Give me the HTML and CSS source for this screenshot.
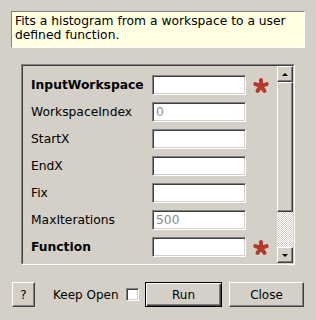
FILE: index.html
```html
<!DOCTYPE html>
<html>
	<head>
		<meta charset="UTF-8">
		<title>Fit</title>
		<link rel="stylesheet" href="styles.css">
	</head>
	<body>
		<div class="desc">Fits a histogram from a workspace to a user defined function.</div>

		<div class="frame">
			<div class="frame-in">
				<div class="props">
					<div class="row">
						<span class="name bold">InputWorkspace</span>
						<span class="field"></span>
						<svg class="star" width="18" height="17" viewBox="-9 -9 18 17">
							<path d="M0 0L0 -6M0 0L5.7 -1.9M0 0L3.5 4.9M0 0L-3.5 4.9M0 0L-5.7 -1.9" stroke="#b23a2c" stroke-width="4" stroke-linecap="round" fill="none"/>
						</svg>
					</div>
					<div class="row">
						<span class="name">WorkspaceIndex</span>
						<span class="field">0</span>
					</div>
					<div class="row">
						<span class="name">StartX</span>
						<span class="field"></span>
					</div>
					<div class="row">
						<span class="name">EndX</span>
						<span class="field"></span>
					</div>
					<div class="row">
						<span class="name">Fix</span>
						<span class="field"></span>
					</div>
					<div class="row">
						<span class="name">MaxIterations</span>
						<span class="field">500</span>
					</div>
					<div class="row">
						<span class="name bold">Function</span>
						<span class="field"></span>
						<svg class="star" width="18" height="17" viewBox="-9 -9 18 17">
							<path d="M0 0L0 -6M0 0L5.7 -1.9M0 0L3.5 4.9M0 0L-3.5 4.9M0 0L-5.7 -1.9" stroke="#b23a2c" stroke-width="4" stroke-linecap="round" fill="none"/>
						</svg>
					</div>
					<div class="row">
						<span class="name"></span>
						<span class="field"></span>
					</div>
				</div>
				<div class="vbar">
					<div class="arrow up"><i></i></div>
					<div class="handle"></div>
					<div class="track"></div>
					<div class="arrow down"><i></i></div>
				</div>
			</div>
		</div>

		<div class="footer">
			<div class="btn help">?</div>
			<span class="keep">Keep Open</span>
			<span class="check"></span>
			<div class="btn run">Run</div>
			<div class="btn close">Close</div>
		</div>
	</body>
</html>
```

FILE: styles.css
```css
*{
	margin: 0;
	padding: 0;
	box-sizing: border-box;
}
body{
	width: 316px;
	height: 320px;
	background: #d4d0c8;
	font-family: "DejaVu Sans", sans-serif;
	font-size: 12.3px;
	color: #000;
	overflow: hidden;
}
.desc{
	margin: 11px 0 0 11px;
	width: 294px;
	height: 37px;
	padding: 2px 3px 0 3px;
	background: #ffffe1;
	border: 1px solid #fff;
	border-top-color: #808080;
	border-left-color: #808080;
	line-height: 14px;
}
.frame{
	margin: 16px 0 0 21px;
	width: 274px;
	height: 201px;
	border: 1px solid #fff;
	border-top-color: #808080;
	border-left-color: #808080;
}
.frame-in{
	height: 100%;
	display: flex;
	border: 1px solid #d4d0c8;
	border-top-color: #404040;
	border-left-color: #404040;
}
.props{
	flex: 1;
	overflow: hidden;
	padding: 9px 0 0 8px;
	display: flex;
	flex-direction: column;
	gap: 7px;
}
.row{
	display: flex;
	align-items: center;
	height: 20px;
	flex-shrink: 0;
}
.name{
	width: 121px;
}
.bold{
	font-weight: bold;
}
.field{
	width: 94px;
	height: 20px;
	background: #fff;
	border: 1px solid #fff;
	border-top-color: #808080;
	border-left-color: #808080;
	box-shadow: inset 1px 1px #404040, inset -1px -1px #d4d0c8;
	padding: 0 3px;
	line-height: 18px;
	color: #8a8a8a;
}
.star{
	margin-left: 6px;
}
.vbar{
	width: 16px;
	display: flex;
	flex-direction: column;
}
.arrow, .handle{
	background: #d4d0c8;
	border: 1px solid #404040;
	border-top-color: #fff;
	border-left-color: #fff;
	box-shadow: inset -1px -1px #808080;
}
.arrow{
	height: 16px;
	display: flex;
	align-items: center;
	justify-content: center;
}
.arrow i{
	width: 0;
	height: 0;
	border-left: 3px solid transparent;
	border-right: 3px solid transparent;
}
.up i{
	border-bottom: 3px solid #000;
}
.down i{
	border-top: 3px solid #000;
}
.handle{
	height: 130px;
}
.track{
	flex: 1;
	background-image: repeating-conic-gradient(#fff 0 25%, #d4d0c8 0 50%);
	background-size: 2px 2px;
}
.footer{
	margin-top: 17px;
	padding-left: 12px;
	display: flex;
	align-items: center;
	font-size: 12px;
}
.btn{
	height: 25px;
	display: flex;
	align-items: center;
	justify-content: center;
	border: 1px solid #404040;
	border-top-color: #fff;
	border-left-color: #fff;
	box-shadow: inset -1px -1px #808080;
}
.help{
	width: 23px;
}
.keep{
	margin-left: 18px;
	width: 67px;
	white-space: nowrap;
}
.check{
	margin-left: 6px;
	width: 13px;
	height: 13px;
	background: #fff;
	border: 1px solid #fff;
	border-top-color: #808080;
	border-left-color: #808080;
	box-shadow: inset 1px 1px #404040, inset -1px -1px #d4d0c8;
}
.run{
	margin-left: 6px;
	width: 77px;
	border: 1px solid #000;
	box-shadow: inset 1px 1px #fff, inset -1px -1px #404040, inset -2px -2px #808080;
}
.close{
	margin-left: 7px;
	width: 75px;
}
```
